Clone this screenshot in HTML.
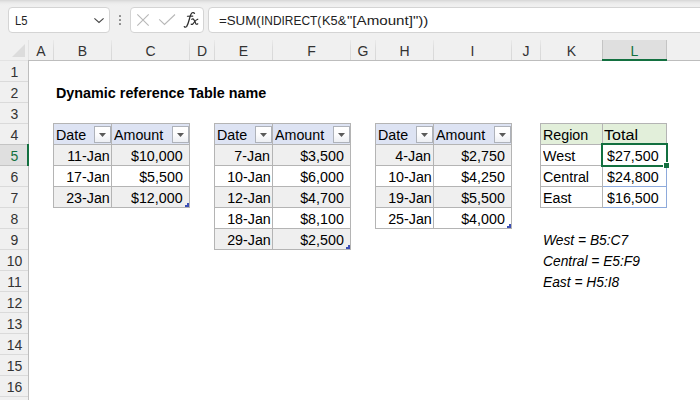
<!DOCTYPE html>
<html><head><meta charset="utf-8"><style>
html,body{margin:0;padding:0;}
body{width:700px;height:400px;overflow:hidden;position:relative;background:#fff;font-family:'Liberation Sans',sans-serif;}
.r{position:absolute;}
.t{position:absolute;white-space:nowrap;font-family:'Liberation Sans',sans-serif;}
</style></head><body>
<div class='r' style='left:0px;top:0px;width:700px;height:40px;background:linear-gradient(#d6d6d6 0px,#e6e6e6 2px,#eeeeee 4px,#f0f0f0 6px);'></div>
<div class='r' style='left:8px;top:7px;width:102px;height:26px;background:#fff;box-sizing:border-box;border:1px solid #d4d4d4;border-radius:4px;'></div>
<div class='t' style='left:15.4px;top:10.97px;font-size:12.5px;line-height:20px;color:#222;transform:scaleX(0.9);transform-origin:0 0;'>L5</div>
<svg class='r' style='left:93px;top:16px' width='12' height='8' viewBox='0 0 12 8'><path d='M1.4 2.3 L6 6.5 L10.6 2.3' fill='none' stroke='#474747' stroke-width='1.15'/></svg>
<div class='r' style='left:119px;top:15px;width:2px;height:2px;background:#8c8c8c;border-radius:0.5px;'></div>
<div class='r' style='left:119px;top:19px;width:2px;height:2px;background:#8c8c8c;border-radius:0.5px;'></div>
<div class='r' style='left:119px;top:23px;width:2px;height:2px;background:#8c8c8c;border-radius:0.5px;'></div>
<div class='r' style='left:130px;top:7px;width:74px;height:26px;background:#fff;box-sizing:border-box;border:1px solid #d4d4d4;border-radius:4px;'></div>
<svg class='r' style='left:136px;top:13px' width='14' height='14' viewBox='0 0 14 14'><path d='M1.3 1.3 L12.7 12.7 M12.7 1.3 L1.3 12.7' stroke='#b8b8b8' stroke-width='1.1'/></svg>
<svg class='r' style='left:158px;top:13px' width='18' height='14' viewBox='0 0 18 14'><path d='M1.2 6.3 L6.5 11.5 L17 1.5' fill='none' stroke='#b8b8b8' stroke-width='1.1'/></svg>
<svg class='r' style='left:180px;top:8px' width='22' height='22' viewBox='0 0 22 22'><g fill='none' stroke='#2b2b2b' stroke-linecap='round'><path d='M4.3 18.6 Q5.2 19.8 6.6 18.6 Q8 16.5 9.4 11 Q10.8 5.6 12.2 4.8 Q13.6 4.1 14.5 5.3' stroke-width='1.25'/><path d='M7.4 8.3 L12.8 8.1' stroke-width='1.1'/><path d='M11.8 11.3 Q13 10.4 13.8 11.6 L15.8 15.6 Q16.6 16.8 17.8 15.8' stroke-width='1.15'/><path d='M17.8 11.2 Q16 11.8 14.8 13.5 L12.8 16 Q12 16.8 11.2 16.2' stroke-width='1.15'/></g></svg>
<div class='r' style='left:208px;top:7px;width:520px;height:26px;background:#fff;box-sizing:border-box;border:1px solid #d4d4d4;border-radius:4px;'></div>
<div class='t' style='left:219.0px;top:10.94px;font-size:12.3px;line-height:20px;color:#222;transform:scaleX(1.08);transform-origin:0 0;'>=SUM(</div>
<div class='t' style='left:260.5px;top:10.94px;font-size:12.3px;line-height:20px;color:#222;transform:scaleX(0.97);transform-origin:0 0;'>INDIRECT(</div>
<div class='t' style='left:321.9px;top:10.94px;font-size:12.3px;line-height:20px;color:#222;transform:scaleX(1.04);transform-origin:0 0;'>K5&amp;</div>
<div class='t' style='left:347.4px;top:10.94px;font-size:12.3px;line-height:20px;color:#222;transform:scaleX(1.23);transform-origin:0 0;'>"[Amount]"))</div>
<div class='r' style='left:0px;top:40px;width:700px;height:20px;background:#f0f0f0;'></div>
<div class='r' style='left:28px;top:60px;width:672px;height:1px;background:#bdbdbd;'></div>
<div class='r' style='left:0px;top:60px;width:28px;height:1px;background:#e3e3e3;'></div>
<div class='r' style='left:603px;top:40px;width:63px;height:19px;background:#dfdfdf;'></div>
<div class='r' style='left:602px;top:40px;width:1px;height:20px;background:#c4c4c4;'></div>
<div class='r' style='left:666px;top:40px;width:1px;height:20px;background:#c4c4c4;'></div>
<div class='r' style='left:602px;top:59px;width:65px;height:2px;background:#137040;'></div>
<div class='r' style='left:53px;top:40px;width:1px;height:20px;background:linear-gradient(#eaeaea,#dcdcdc 40%,#d8d8d8);'></div>
<div class='r' style='left:111px;top:40px;width:1px;height:20px;background:linear-gradient(#eaeaea,#dcdcdc 40%,#d8d8d8);'></div>
<div class='r' style='left:189px;top:40px;width:1px;height:20px;background:linear-gradient(#eaeaea,#dcdcdc 40%,#d8d8d8);'></div>
<div class='r' style='left:214px;top:40px;width:1px;height:20px;background:linear-gradient(#eaeaea,#dcdcdc 40%,#d8d8d8);'></div>
<div class='r' style='left:272px;top:40px;width:1px;height:20px;background:linear-gradient(#eaeaea,#dcdcdc 40%,#d8d8d8);'></div>
<div class='r' style='left:350px;top:40px;width:1px;height:20px;background:linear-gradient(#eaeaea,#dcdcdc 40%,#d8d8d8);'></div>
<div class='r' style='left:375px;top:40px;width:1px;height:20px;background:linear-gradient(#eaeaea,#dcdcdc 40%,#d8d8d8);'></div>
<div class='r' style='left:433px;top:40px;width:1px;height:20px;background:linear-gradient(#eaeaea,#dcdcdc 40%,#d8d8d8);'></div>
<div class='r' style='left:511px;top:40px;width:1px;height:20px;background:linear-gradient(#eaeaea,#dcdcdc 40%,#d8d8d8);'></div>
<div class='r' style='left:540px;top:40px;width:1px;height:20px;background:linear-gradient(#eaeaea,#dcdcdc 40%,#d8d8d8);'></div>
<svg class='r' style='left:12px;top:44px' width='14' height='14' viewBox='0 0 14 14'><path d='M13 0 L13 13 L0 13 Z' fill='#dcdcdc'/></svg>
<div class='t' style='left:-59.0px;width:200px;text-align:center;top:41.15px;font-size:14px;line-height:20px;color:#333;transform:scaleX(1.0);transform-origin:50% 0;'>A</div>
<div class='t' style='left:-17.5px;width:200px;text-align:center;top:41.15px;font-size:14px;line-height:20px;color:#333;transform:scaleX(1.0);transform-origin:50% 0;'>B</div>
<div class='t' style='left:50.5px;width:200px;text-align:center;top:41.15px;font-size:14px;line-height:20px;color:#333;transform:scaleX(1.0);transform-origin:50% 0;'>C</div>
<div class='t' style='left:102.0px;width:200px;text-align:center;top:41.15px;font-size:14px;line-height:20px;color:#333;transform:scaleX(1.0);transform-origin:50% 0;'>D</div>
<div class='t' style='left:143.5px;width:200px;text-align:center;top:41.15px;font-size:14px;line-height:20px;color:#333;transform:scaleX(1.0);transform-origin:50% 0;'>E</div>
<div class='t' style='left:211.5px;width:200px;text-align:center;top:41.15px;font-size:14px;line-height:20px;color:#333;transform:scaleX(1.0);transform-origin:50% 0;'>F</div>
<div class='t' style='left:263.0px;width:200px;text-align:center;top:41.15px;font-size:14px;line-height:20px;color:#333;transform:scaleX(1.0);transform-origin:50% 0;'>G</div>
<div class='t' style='left:304.5px;width:200px;text-align:center;top:41.15px;font-size:14px;line-height:20px;color:#333;transform:scaleX(1.0);transform-origin:50% 0;'>H</div>
<div class='t' style='left:372.5px;width:200px;text-align:center;top:41.15px;font-size:14px;line-height:20px;color:#333;transform:scaleX(1.0);transform-origin:50% 0;'>I</div>
<div class='t' style='left:426.0px;width:200px;text-align:center;top:41.15px;font-size:14px;line-height:20px;color:#333;transform:scaleX(1.0);transform-origin:50% 0;'>J</div>
<div class='t' style='left:471.5px;width:200px;text-align:center;top:41.15px;font-size:14px;line-height:20px;color:#333;transform:scaleX(1.0);transform-origin:50% 0;'>K</div>
<div class='t' style='left:534.5px;width:200px;text-align:center;top:41.15px;font-size:14px;line-height:20px;color:#137040;transform:scaleX(1.0);transform-origin:50% 0;'>L</div>
<div class='r' style='left:0px;top:61px;width:28px;height:339px;background:#f0f0f0;'></div>
<div class='r' style='left:28px;top:40px;width:1px;height:20px;background:#e3e3e3;'></div>
<div class='r' style='left:28px;top:61px;width:1px;height:339px;background:#bdbdbd;'></div>
<div class='r' style='left:0px;top:145px;width:27px;height:20px;background:#dfdfdf;'></div>
<div class='r' style='left:0px;top:81px;width:28px;height:1px;background:#dadada;'></div>
<div class='r' style='left:0px;top:102px;width:28px;height:1px;background:#dadada;'></div>
<div class='r' style='left:0px;top:123px;width:28px;height:1px;background:#dadada;'></div>
<div class='r' style='left:0px;top:144px;width:28px;height:1px;background:#dadada;'></div>
<div class='r' style='left:0px;top:165px;width:28px;height:1px;background:#dadada;'></div>
<div class='r' style='left:0px;top:186px;width:28px;height:1px;background:#dadada;'></div>
<div class='r' style='left:0px;top:207px;width:28px;height:1px;background:#dadada;'></div>
<div class='r' style='left:0px;top:228px;width:28px;height:1px;background:#dadada;'></div>
<div class='r' style='left:0px;top:249px;width:28px;height:1px;background:#dadada;'></div>
<div class='r' style='left:0px;top:270px;width:28px;height:1px;background:#dadada;'></div>
<div class='r' style='left:0px;top:291px;width:28px;height:1px;background:#dadada;'></div>
<div class='r' style='left:0px;top:312px;width:28px;height:1px;background:#dadada;'></div>
<div class='r' style='left:0px;top:333px;width:28px;height:1px;background:#dadada;'></div>
<div class='r' style='left:0px;top:354px;width:28px;height:1px;background:#dadada;'></div>
<div class='r' style='left:0px;top:375px;width:28px;height:1px;background:#dadada;'></div>
<div class='r' style='left:0px;top:396px;width:28px;height:1px;background:#dadada;'></div>
<div class='r' style='left:0px;top:144px;width:28px;height:1px;background:#c4c4c4;'></div>
<div class='r' style='left:0px;top:165px;width:28px;height:1px;background:#c4c4c4;'></div>
<div class='r' style='left:27px;top:144px;width:2px;height:22px;background:#137040;'></div>
<div class='t' style='left:-85.5px;width:200px;text-align:center;top:62.05px;font-size:14px;line-height:20px;color:#333;transform:scaleX(1.0);transform-origin:50% 0;'>1</div>
<div class='t' style='left:-85.5px;width:200px;text-align:center;top:83.05px;font-size:14px;line-height:20px;color:#333;transform:scaleX(1.0);transform-origin:50% 0;'>2</div>
<div class='t' style='left:-85.5px;width:200px;text-align:center;top:104.05px;font-size:14px;line-height:20px;color:#333;transform:scaleX(1.0);transform-origin:50% 0;'>3</div>
<div class='t' style='left:-85.5px;width:200px;text-align:center;top:125.05px;font-size:14px;line-height:20px;color:#333;transform:scaleX(1.0);transform-origin:50% 0;'>4</div>
<div class='t' style='left:-85.5px;width:200px;text-align:center;top:146.05px;font-size:14px;line-height:20px;color:#137040;transform:scaleX(1.0);transform-origin:50% 0;'>5</div>
<div class='t' style='left:-85.5px;width:200px;text-align:center;top:167.05px;font-size:14px;line-height:20px;color:#333;transform:scaleX(1.0);transform-origin:50% 0;'>6</div>
<div class='t' style='left:-85.5px;width:200px;text-align:center;top:188.05px;font-size:14px;line-height:20px;color:#333;transform:scaleX(1.0);transform-origin:50% 0;'>7</div>
<div class='t' style='left:-85.5px;width:200px;text-align:center;top:209.05px;font-size:14px;line-height:20px;color:#333;transform:scaleX(1.0);transform-origin:50% 0;'>8</div>
<div class='t' style='left:-85.5px;width:200px;text-align:center;top:230.05px;font-size:14px;line-height:20px;color:#333;transform:scaleX(1.0);transform-origin:50% 0;'>9</div>
<div class='t' style='left:-85.5px;width:200px;text-align:center;top:251.05px;font-size:14px;line-height:20px;color:#333;transform:scaleX(1.0);transform-origin:50% 0;'>10</div>
<div class='t' style='left:-85.5px;width:200px;text-align:center;top:272.05px;font-size:14px;line-height:20px;color:#333;transform:scaleX(1.0);transform-origin:50% 0;'>11</div>
<div class='t' style='left:-85.5px;width:200px;text-align:center;top:293.05px;font-size:14px;line-height:20px;color:#333;transform:scaleX(1.0);transform-origin:50% 0;'>12</div>
<div class='t' style='left:-85.5px;width:200px;text-align:center;top:314.05px;font-size:14px;line-height:20px;color:#333;transform:scaleX(1.0);transform-origin:50% 0;'>13</div>
<div class='t' style='left:-85.5px;width:200px;text-align:center;top:335.05px;font-size:14px;line-height:20px;color:#333;transform:scaleX(1.0);transform-origin:50% 0;'>14</div>
<div class='t' style='left:-85.5px;width:200px;text-align:center;top:356.05px;font-size:14px;line-height:20px;color:#333;transform:scaleX(1.0);transform-origin:50% 0;'>15</div>
<div class='t' style='left:-85.5px;width:200px;text-align:center;top:377.05px;font-size:14px;line-height:20px;color:#333;transform:scaleX(1.0);transform-origin:50% 0;'>16</div>
<div class='t' style='left:56px;top:83.45px;font-size:14px;line-height:20px;color:#000;transform:scaleX(1.025);transform-origin:0 0;font-weight:bold;'>Dynamic reference Table name</div>
<div class='r' style='left:53px;top:123px;width:136px;height:21px;background:#dde3f3;'></div>
<div class='r' style='left:53px;top:144px;width:136px;height:21px;background:#efefef;'></div>
<div class='r' style='left:53px;top:165px;width:136px;height:21px;background:#fff;'></div>
<div class='r' style='left:53px;top:186px;width:136px;height:21px;background:#efefef;'></div>
<div class='r' style='left:53px;top:123px;width:137px;height:1px;background:#b4b4b4;'></div>
<div class='r' style='left:53px;top:144px;width:137px;height:1px;background:#b4b4b4;'></div>
<div class='r' style='left:53px;top:165px;width:137px;height:1px;background:#b4b4b4;'></div>
<div class='r' style='left:53px;top:186px;width:137px;height:1px;background:#b4b4b4;'></div>
<div class='r' style='left:53px;top:207px;width:137px;height:1px;background:#b4b4b4;'></div>
<div class='r' style='left:53px;top:123px;width:1px;height:85px;background:#b4b4b4;'></div>
<div class='r' style='left:111px;top:123px;width:1px;height:85px;background:#b4b4b4;'></div>
<div class='r' style='left:189px;top:123px;width:1px;height:85px;background:#b4b4b4;'></div>
<div class='t' style='left:55.5px;top:125.15px;font-size:14px;line-height:20px;color:#000;transform:scaleX(1.02);transform-origin:0 0;'>Date</div>
<div class='t' style='left:113.5px;top:125.15px;font-size:14px;line-height:20px;color:#000;transform:scaleX(1.02);transform-origin:0 0;'>Amount</div>
<div class='r' style='left:94px;top:126px;width:17px;height:17px;background:linear-gradient(#ffffff,#fcfcfd 50%,#eceef3);box-sizing:border-box;border:1px solid #aeb2ba;'></div>
<svg class='r' style='left:99px;top:133px' width='7' height='4' viewBox='0 0 7 4'><path d='M0 0 L7 0 L3.5 4 Z' fill='#5a5a5a'/></svg>
<div class='r' style='left:172px;top:126px;width:17px;height:17px;background:linear-gradient(#ffffff,#fcfcfd 50%,#eceef3);box-sizing:border-box;border:1px solid #aeb2ba;'></div>
<svg class='r' style='left:177px;top:133px' width='7' height='4' viewBox='0 0 7 4'><path d='M0 0 L7 0 L3.5 4 Z' fill='#5a5a5a'/></svg>
<div class='t' style='right:590.5px;top:146.45px;font-size:14px;line-height:20px;color:#000;transform:scaleX(1.02);transform-origin:100% 0;'>11-Jan</div>
<div class='t' style='right:517.5px;top:146.45px;font-size:14px;line-height:20px;color:#000;transform:scaleX(1.02);transform-origin:100% 0;'>$10,000</div>
<div class='t' style='right:590.5px;top:167.45px;font-size:14px;line-height:20px;color:#000;transform:scaleX(1.02);transform-origin:100% 0;'>17-Jan</div>
<div class='t' style='right:517.5px;top:167.45px;font-size:14px;line-height:20px;color:#000;transform:scaleX(1.02);transform-origin:100% 0;'>$5,500</div>
<div class='t' style='right:590.5px;top:188.45px;font-size:14px;line-height:20px;color:#000;transform:scaleX(1.02);transform-origin:100% 0;'>23-Jan</div>
<div class='t' style='right:517.5px;top:188.45px;font-size:14px;line-height:20px;color:#000;transform:scaleX(1.02);transform-origin:100% 0;'>$12,000</div>
<svg class='r' style='left:185px;top:203px' width='4' height='4' viewBox='0 0 4 4'><path d='M2 0 H4 V4 H0 V2 H2 Z' fill='#3c4fb4'/></svg>
<div class='r' style='left:214px;top:123px;width:136px;height:21px;background:#dde3f3;'></div>
<div class='r' style='left:214px;top:144px;width:136px;height:21px;background:#efefef;'></div>
<div class='r' style='left:214px;top:165px;width:136px;height:21px;background:#fff;'></div>
<div class='r' style='left:214px;top:186px;width:136px;height:21px;background:#efefef;'></div>
<div class='r' style='left:214px;top:207px;width:136px;height:21px;background:#fff;'></div>
<div class='r' style='left:214px;top:228px;width:136px;height:21px;background:#efefef;'></div>
<div class='r' style='left:214px;top:123px;width:137px;height:1px;background:#b4b4b4;'></div>
<div class='r' style='left:214px;top:144px;width:137px;height:1px;background:#b4b4b4;'></div>
<div class='r' style='left:214px;top:165px;width:137px;height:1px;background:#b4b4b4;'></div>
<div class='r' style='left:214px;top:186px;width:137px;height:1px;background:#b4b4b4;'></div>
<div class='r' style='left:214px;top:207px;width:137px;height:1px;background:#b4b4b4;'></div>
<div class='r' style='left:214px;top:228px;width:137px;height:1px;background:#b4b4b4;'></div>
<div class='r' style='left:214px;top:249px;width:137px;height:1px;background:#b4b4b4;'></div>
<div class='r' style='left:214px;top:123px;width:1px;height:127px;background:#b4b4b4;'></div>
<div class='r' style='left:272px;top:123px;width:1px;height:127px;background:#b4b4b4;'></div>
<div class='r' style='left:350px;top:123px;width:1px;height:127px;background:#b4b4b4;'></div>
<div class='t' style='left:216.5px;top:125.15px;font-size:14px;line-height:20px;color:#000;transform:scaleX(1.02);transform-origin:0 0;'>Date</div>
<div class='t' style='left:274.5px;top:125.15px;font-size:14px;line-height:20px;color:#000;transform:scaleX(1.02);transform-origin:0 0;'>Amount</div>
<div class='r' style='left:255px;top:126px;width:17px;height:17px;background:linear-gradient(#ffffff,#fcfcfd 50%,#eceef3);box-sizing:border-box;border:1px solid #aeb2ba;'></div>
<svg class='r' style='left:260px;top:133px' width='7' height='4' viewBox='0 0 7 4'><path d='M0 0 L7 0 L3.5 4 Z' fill='#5a5a5a'/></svg>
<div class='r' style='left:333px;top:126px;width:17px;height:17px;background:linear-gradient(#ffffff,#fcfcfd 50%,#eceef3);box-sizing:border-box;border:1px solid #aeb2ba;'></div>
<svg class='r' style='left:338px;top:133px' width='7' height='4' viewBox='0 0 7 4'><path d='M0 0 L7 0 L3.5 4 Z' fill='#5a5a5a'/></svg>
<div class='t' style='right:429.5px;top:146.45px;font-size:14px;line-height:20px;color:#000;transform:scaleX(1.02);transform-origin:100% 0;'>7-Jan</div>
<div class='t' style='right:356.5px;top:146.45px;font-size:14px;line-height:20px;color:#000;transform:scaleX(1.02);transform-origin:100% 0;'>$3,500</div>
<div class='t' style='right:429.5px;top:167.45px;font-size:14px;line-height:20px;color:#000;transform:scaleX(1.02);transform-origin:100% 0;'>10-Jan</div>
<div class='t' style='right:356.5px;top:167.45px;font-size:14px;line-height:20px;color:#000;transform:scaleX(1.02);transform-origin:100% 0;'>$6,000</div>
<div class='t' style='right:429.5px;top:188.45px;font-size:14px;line-height:20px;color:#000;transform:scaleX(1.02);transform-origin:100% 0;'>12-Jan</div>
<div class='t' style='right:356.5px;top:188.45px;font-size:14px;line-height:20px;color:#000;transform:scaleX(1.02);transform-origin:100% 0;'>$4,700</div>
<div class='t' style='right:429.5px;top:209.45px;font-size:14px;line-height:20px;color:#000;transform:scaleX(1.02);transform-origin:100% 0;'>18-Jan</div>
<div class='t' style='right:356.5px;top:209.45px;font-size:14px;line-height:20px;color:#000;transform:scaleX(1.02);transform-origin:100% 0;'>$8,100</div>
<div class='t' style='right:429.5px;top:230.45px;font-size:14px;line-height:20px;color:#000;transform:scaleX(1.02);transform-origin:100% 0;'>29-Jan</div>
<div class='t' style='right:356.5px;top:230.45px;font-size:14px;line-height:20px;color:#000;transform:scaleX(1.02);transform-origin:100% 0;'>$2,500</div>
<svg class='r' style='left:346px;top:245px' width='4' height='4' viewBox='0 0 4 4'><path d='M2 0 H4 V4 H0 V2 H2 Z' fill='#3c4fb4'/></svg>
<div class='r' style='left:375px;top:123px;width:136px;height:21px;background:#dde3f3;'></div>
<div class='r' style='left:375px;top:144px;width:136px;height:21px;background:#efefef;'></div>
<div class='r' style='left:375px;top:165px;width:136px;height:21px;background:#fff;'></div>
<div class='r' style='left:375px;top:186px;width:136px;height:21px;background:#efefef;'></div>
<div class='r' style='left:375px;top:207px;width:136px;height:21px;background:#fff;'></div>
<div class='r' style='left:375px;top:123px;width:137px;height:1px;background:#b4b4b4;'></div>
<div class='r' style='left:375px;top:144px;width:137px;height:1px;background:#b4b4b4;'></div>
<div class='r' style='left:375px;top:165px;width:137px;height:1px;background:#b4b4b4;'></div>
<div class='r' style='left:375px;top:186px;width:137px;height:1px;background:#b4b4b4;'></div>
<div class='r' style='left:375px;top:207px;width:137px;height:1px;background:#b4b4b4;'></div>
<div class='r' style='left:375px;top:228px;width:137px;height:1px;background:#b4b4b4;'></div>
<div class='r' style='left:375px;top:123px;width:1px;height:106px;background:#b4b4b4;'></div>
<div class='r' style='left:433px;top:123px;width:1px;height:106px;background:#b4b4b4;'></div>
<div class='r' style='left:511px;top:123px;width:1px;height:106px;background:#b4b4b4;'></div>
<div class='t' style='left:377.5px;top:125.15px;font-size:14px;line-height:20px;color:#000;transform:scaleX(1.02);transform-origin:0 0;'>Date</div>
<div class='t' style='left:435.5px;top:125.15px;font-size:14px;line-height:20px;color:#000;transform:scaleX(1.02);transform-origin:0 0;'>Amount</div>
<div class='r' style='left:416px;top:126px;width:17px;height:17px;background:linear-gradient(#ffffff,#fcfcfd 50%,#eceef3);box-sizing:border-box;border:1px solid #aeb2ba;'></div>
<svg class='r' style='left:421px;top:133px' width='7' height='4' viewBox='0 0 7 4'><path d='M0 0 L7 0 L3.5 4 Z' fill='#5a5a5a'/></svg>
<div class='r' style='left:494px;top:126px;width:17px;height:17px;background:linear-gradient(#ffffff,#fcfcfd 50%,#eceef3);box-sizing:border-box;border:1px solid #aeb2ba;'></div>
<svg class='r' style='left:499px;top:133px' width='7' height='4' viewBox='0 0 7 4'><path d='M0 0 L7 0 L3.5 4 Z' fill='#5a5a5a'/></svg>
<div class='t' style='right:268.5px;top:146.45px;font-size:14px;line-height:20px;color:#000;transform:scaleX(1.02);transform-origin:100% 0;'>4-Jan</div>
<div class='t' style='right:195.5px;top:146.45px;font-size:14px;line-height:20px;color:#000;transform:scaleX(1.02);transform-origin:100% 0;'>$2,750</div>
<div class='t' style='right:268.5px;top:167.45px;font-size:14px;line-height:20px;color:#000;transform:scaleX(1.02);transform-origin:100% 0;'>10-Jan</div>
<div class='t' style='right:195.5px;top:167.45px;font-size:14px;line-height:20px;color:#000;transform:scaleX(1.02);transform-origin:100% 0;'>$4,250</div>
<div class='t' style='right:268.5px;top:188.45px;font-size:14px;line-height:20px;color:#000;transform:scaleX(1.02);transform-origin:100% 0;'>19-Jan</div>
<div class='t' style='right:195.5px;top:188.45px;font-size:14px;line-height:20px;color:#000;transform:scaleX(1.02);transform-origin:100% 0;'>$5,500</div>
<div class='t' style='right:268.5px;top:209.45px;font-size:14px;line-height:20px;color:#000;transform:scaleX(1.02);transform-origin:100% 0;'>25-Jan</div>
<div class='t' style='right:195.5px;top:209.45px;font-size:14px;line-height:20px;color:#000;transform:scaleX(1.02);transform-origin:100% 0;'>$4,000</div>
<svg class='r' style='left:507px;top:224px' width='4' height='4' viewBox='0 0 4 4'><path d='M2 0 H4 V4 H0 V2 H2 Z' fill='#3c4fb4'/></svg>
<div class='r' style='left:540px;top:123px;width:126px;height:21px;background:#e2efda;'></div>
<div class='r' style='left:540px;top:123px;width:63px;height:1px;background:#b4b4b4;'></div>
<div class='r' style='left:540px;top:144px;width:63px;height:1px;background:#b4b4b4;'></div>
<div class='r' style='left:540px;top:165px;width:63px;height:1px;background:#b4b4b4;'></div>
<div class='r' style='left:540px;top:186px;width:63px;height:1px;background:#b4b4b4;'></div>
<div class='r' style='left:540px;top:207px;width:63px;height:1px;background:#b4b4b4;'></div>
<div class='r' style='left:602px;top:123px;width:65px;height:1px;background:#b4b4b4;'></div>
<div class='r' style='left:602px;top:144px;width:65px;height:1px;background:#b4b4b4;'></div>
<div class='r' style='left:540px;top:123px;width:1px;height:85px;background:#b4b4b4;'></div>
<div class='r' style='left:602px;top:123px;width:1px;height:85px;background:#b4b4b4;'></div>
<div class='r' style='left:666px;top:123px;width:1px;height:22px;background:#b4b4b4;'></div>
<div class='r' style='left:603px;top:186px;width:64px;height:1px;background:#8eaadb;'></div>
<div class='r' style='left:603px;top:207px;width:64px;height:1px;background:#8eaadb;'></div>
<div class='r' style='left:666px;top:165px;width:1px;height:43px;background:#8eaadb;'></div>
<div class='t' style='left:542.8px;top:125.15px;font-size:14px;line-height:20px;color:#000;transform:scaleX(1.02);transform-origin:0 0;'>Region</div>
<div class='t' style='left:604.0px;top:125.15px;font-size:14px;line-height:20px;color:#000;transform:scaleX(1.15);transform-origin:0 0;'>Total</div>
<div class='t' style='left:542.8px;top:146.45px;font-size:14px;line-height:20px;color:#000;transform:scaleX(1.02);transform-origin:0 0;'>West</div>
<div class='t' style='left:606.7px;top:146.45px;font-size:14px;line-height:20px;color:#000;transform:scaleX(1.02);transform-origin:0 0;'>$27,500</div>
<div class='t' style='left:542.8px;top:167.45px;font-size:14px;line-height:20px;color:#000;transform:scaleX(1.02);transform-origin:0 0;'>Central</div>
<div class='t' style='left:606.7px;top:167.45px;font-size:14px;line-height:20px;color:#000;transform:scaleX(1.02);transform-origin:0 0;'>$24,800</div>
<div class='t' style='left:542.8px;top:188.45px;font-size:14px;line-height:20px;color:#000;transform:scaleX(1.02);transform-origin:0 0;'>East</div>
<div class='t' style='left:606.7px;top:188.45px;font-size:14px;line-height:20px;color:#000;transform:scaleX(1.02);transform-origin:0 0;'>$16,500</div>
<div class='r' style='left:601px;top:143px;width:67px;height:24px;box-sizing:border-box;border:2px solid #137040'></div>
<div class='r' style='left:663px;top:162px;width:6px;height:6px;background:#fff;'></div>
<div class='r' style='left:664px;top:163px;width:5px;height:5px;background:#137040;'></div>
<div class='t' style='left:543px;top:230.45px;font-size:14px;line-height:20px;color:#000;transform:scaleX(0.985);transform-origin:0 0;font-style:italic;'>West = B5:C7</div>
<div class='t' style='left:543px;top:251.45px;font-size:14px;line-height:20px;color:#000;transform:scaleX(0.985);transform-origin:0 0;font-style:italic;'>Central = E5:F9</div>
<div class='t' style='left:543px;top:272.45px;font-size:14px;line-height:20px;color:#000;transform:scaleX(0.985);transform-origin:0 0;font-style:italic;'>East = H5:I8</div>
</body></html>
